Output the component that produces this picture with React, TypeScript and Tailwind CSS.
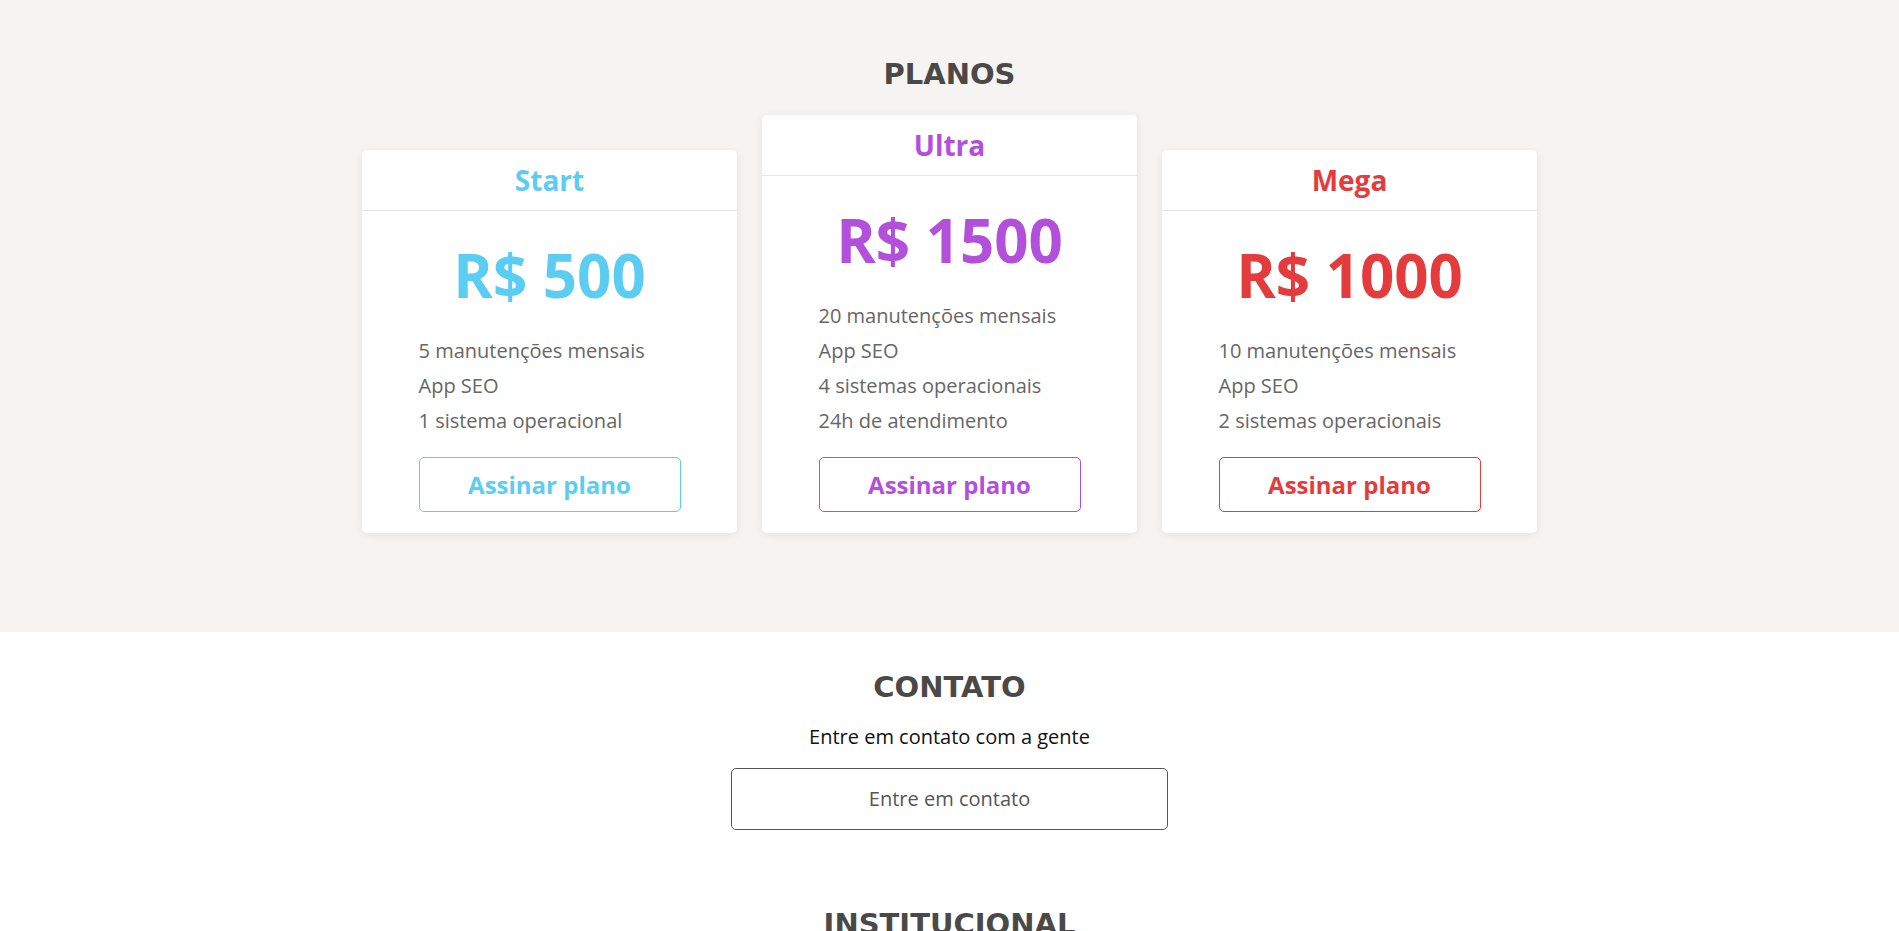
import React from 'react';

interface Plano {
  nome: string;
  preco: string;
  cor: string;
  itens: string[];
}

const planos: Plano[] = [
  {
    nome: 'Start',
    preco: 'R$ 500',
    cor: 'start',
    itens: ['5 manutenções mensais', 'App SEO', '1 sistema operacional'],
  },
  {
    nome: 'Ultra',
    preco: 'R$ 1500',
    cor: 'ultra',
    itens: [
      '20 manutenções mensais',
      'App SEO',
      '4 sistemas operacionais',
      '24h de atendimento',
    ],
  },
  {
    nome: 'Mega',
    preco: 'R$ 1000',
    cor: 'mega',
    itens: ['10 manutenções mensais', 'App SEO', '2 sistemas operacionais'],
  },
];

const cores: Record<string, { text: string; border: string }> = {
  start: { text: 'text-[#5bcdf3]', border: 'border-[#5bcdf3]' },
  ultra: { text: 'text-[#b24fdb]', border: 'border-[#b24fdb]' },
  mega: { text: 'text-[#e43b3c]', border: 'border-[#e43b3c]' },
};

const heading = "font-['DejaVu_Sans',sans-serif] font-bold text-[29px] leading-none text-[#4a4947] text-center";

function CardPlano({ plano }: { plano: Plano }) {
  const c = cores[plano.cor];
  return (
    <div className="w-[375px] bg-white rounded-[5px] shadow-[0_2px_10px_rgba(0,0,0,0.07)] flex flex-col items-center">
      <div className="w-full h-[61px] border-b border-[#e6e6e6] flex items-center justify-center">
        <h3 className={`text-[28px] font-bold ${c.text}`}>{plano.nome}</h3>
      </div>
      <div className="w-[262px] pt-[28px] pb-[21px] flex flex-col">
        <p className={`text-center text-[60px] leading-[72px] font-bold mb-[22px] ${c.text}`}>
          {plano.preco}
        </p>
        <ul>
          {plano.itens.map((item) => (
            <li key={item} className="text-[20px] leading-[35px] text-[#666]">
              {item}
            </li>
          ))}
        </ul>
        <button
          className={`mt-[19px] h-[55px] w-full bg-white border rounded-[5px] text-[24px] font-bold ${c.text} ${c.border}`}
        >
          Assinar plano
        </button>
      </div>
    </div>
  );
}

export default function App() {
  return (
    <div className="min-h-screen bg-white font-['Open_Sans',sans-serif]">
      {/* Planos */}
      <section className="bg-[#f5f4f2] pt-[60px] pb-[99px]">
        <h2 className={heading}>PLANOS</h2>
        <div className="mt-[26px] flex justify-center items-end gap-[25px]">
          {planos.map((p) => (
            <CardPlano key={p.nome} plano={p} />
          ))}
        </div>
      </section>

      {/* Contato */}
      <section className="pt-[41px] flex flex-col items-center">
        <h2 className={heading}>CONTATO</h2>
        <p className="mt-[21px] text-[20px] leading-[28px] text-[#111]">
          Entre em contato com a gente
        </p>
        <button className="mt-[17px] w-[437px] h-[62px] border border-[#555] rounded-[5px] text-[20px] text-[#555] bg-white">
          Entre em contato
        </button>
        <h2 className={`${heading} mt-[80px] mb-[40px]`}>INSTITUCIONAL</h2>
      </section>
    </div>
  );
}
